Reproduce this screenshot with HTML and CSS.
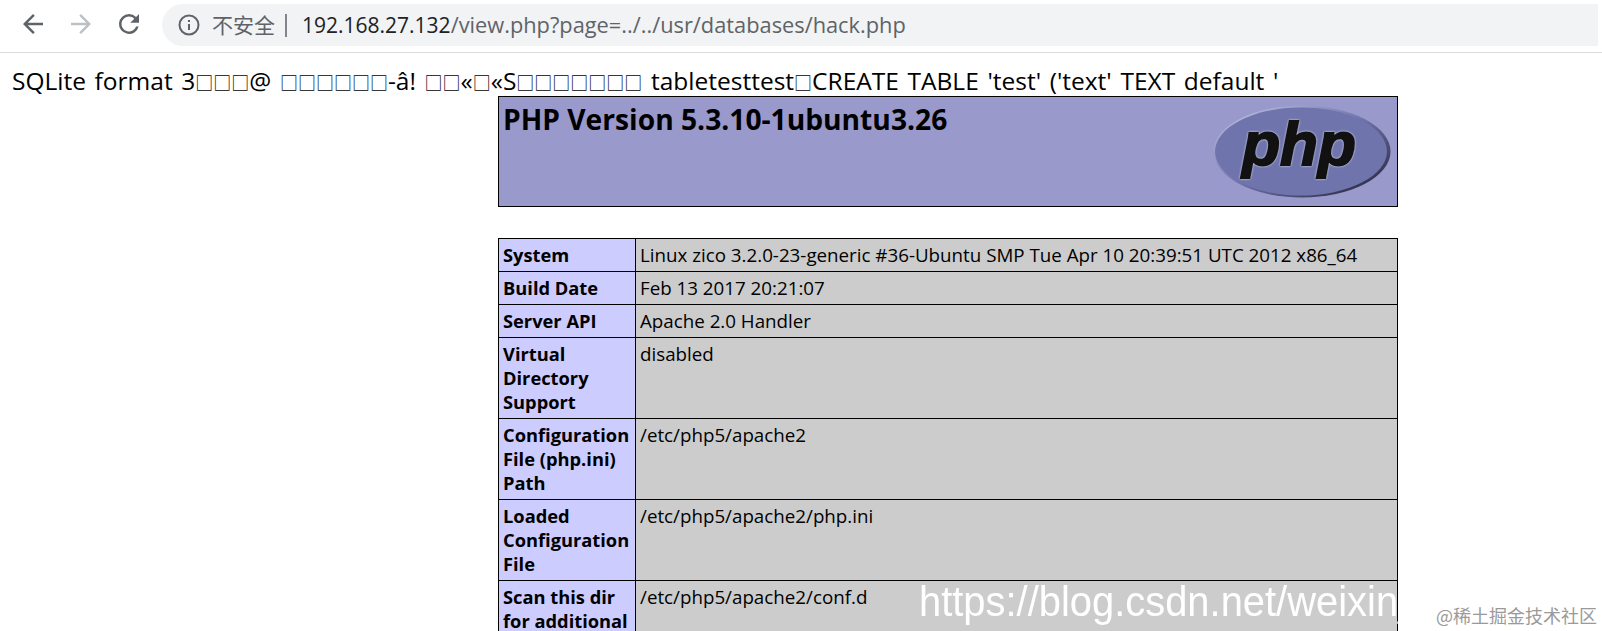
FILE: index.html
```html
<!DOCTYPE html>
<html lang="en">
<head>
<meta charset="utf-8">
<title>hack.php</title>
<link rel="stylesheet" href="styles.css">
</head>
<body>
<header class="toolbar">
  <svg class="nav" width="30" height="30" viewBox="0 0 24 24"><path d="M20 11H7.8l5.6-5.6L12 4l-8 8 8 8 1.4-1.4L7.8 13H20z" fill="#5f6368"/></svg>
  <svg class="nav" width="30" height="30" viewBox="0 0 24 24"><path d="M4 11h12.2l-5.6-5.6L12 4l8 8-8 8-1.4-1.4 5.6-5.6H4z" fill="#bdc1c6"/></svg>
  <svg class="nav" width="30" height="30" viewBox="0 0 24 24"><path d="M17.65 6.35A7.96 7.96 0 0 0 12 4a8 8 0 1 0 7.73 10h-2.08A6 6 0 1 1 12 6c1.66 0 3.14.69 4.22 1.78L13 11h7V4z" fill="#5f6368"/></svg>
  <div class="omnibox">
    <svg class="info" width="24" height="24" viewBox="0 0 24 24"><circle cx="12" cy="12" r="9.5" fill="none" stroke="#5f6368" stroke-width="2"/><path d="M11 11h2v6h-2zM11 7h2v2h-2z" fill="#5f6368"/></svg>
    <span class="insecure">不安全</span>
    <span class="sep"></span>
    <span class="url"><span class="host">192.168.27.132</span>/view.php?page=../../usr/databases/hack.php</span>
  </div>
</header>
<main class="page">
  <p class="dump">SQLite format 3<span class="tofu">□□□</span>@ <span class="tofu">□□□□□□</span>-â! <span class="tofu">□□</span>«<span class="tofu">□</span>«S<span class="tofu">□□□□□□□</span> tabletesttest<span class="tofu">□</span>CREATE TABLE 'test' ('text' TEXT default '</p>
  <div class="phpinfo">
    <div class="banner">
      <h1>PHP Version 5.3.10-1ubuntu3.26</h1>
      <svg class="logo" width="178" height="93" viewBox="0 0 178 93">
        <defs>
          <linearGradient id="rim" x1="0" y1="0" x2="1" y2="1">
            <stop offset="0" stop-color="#c8cbe4"/>
            <stop offset=".45" stop-color="#777bb4"/>
            <stop offset="1" stop-color="#1c1c30"/>
          </linearGradient>
        </defs>
        <ellipse cx="89" cy="46.5" rx="88.5" ry="46" fill="url(#rim)"/>
        <ellipse cx="88" cy="46.5" rx="86" ry="44" fill="#6f74ad"/>
        <text x="86" y="60" class="logo-text">php</text>
      </svg>
    </div>
    <table class="info-table">
      <tr><th>System</th><td>Linux zico 3.2.0-23-generic #36-Ubuntu SMP Tue Apr 10 20:39:51 UTC 2012 x86_64</td></tr>
      <tr><th>Build Date</th><td>Feb 13 2017 20:21:07</td></tr>
      <tr><th>Server API</th><td>Apache 2.0 Handler</td></tr>
      <tr><th>Virtual Directory Support</th><td>disabled</td></tr>
      <tr><th>Configuration File (php.ini) Path</th><td>/etc/php5/apache2</td></tr>
      <tr><th>Loaded Configuration File</th><td>/etc/php5/apache2/php.ini</td></tr>
      <tr><th>Scan this dir for additional .ini files</th><td>/etc/php5/apache2/conf.d</td></tr>
    </table>
  </div>
</main>
<div class="mark-csdn">https://blog.csdn.net/weixin_</div>
<div class="mark-juejin">@稀土掘金技术社区</div>
</body>
</html>
```
FILE: styles.css
```css
html, body {
  margin: 0;
  height: 631px;
  overflow: hidden;
  background: #fff;
}
body {
  position: relative;
  color: #000;
  font-family: "Noto Sans", "Noto Sans CJK SC", sans-serif;
}
.toolbar {
  display: flex;
  align-items: center;
  height: 52px;
  padding: 0 0 0 18px;
  border-bottom: 1px solid #dadce0;
  box-sizing: content-box;
}
.nav { margin: 0 18px 4px 0; flex: none; }
.omnibox {
  flex: 1;
  display: flex;
  align-items: center;
  height: 42px;
  margin: 0 4px 2px 0;
  padding-left: 15px;
  background: #f1f3f4;
  border-radius: 21px 0 0 21px;
}
.info { flex: none; margin-right: 11px; }
.insecure {
  margin-bottom: 2px;
  font: 21px/1 "Noto Sans CJK SC", sans-serif;
  color: #5f6368;
}
.sep {
  width: 2px;
  height: 23px;
  margin: 0 15px 0 10px;
  background: #80868b;
}
.url {
  font: 21.8px/1 "Open Sans", sans-serif;
  color: #5f6368;
  white-space: nowrap;
}
.host { color: #202124; font-size: 21px; }
.page { padding: 0 0 0 12px; }
.dump {
  margin: 0;
  height: 43px;
  padding-top: 13px;
  box-sizing: border-box;
  font: 24.5px/30px "Open Sans", sans-serif;
  word-spacing: 2.3px;
  white-space: nowrap;
}
.tofu {
  font: 18px/1 "Noto Sans CJK SC", sans-serif;
}
.phpinfo {
  width: 900px;
  margin-left: 486px;
  font-size: 18px;
  font-family: "Open Sans", sans-serif;
}
.banner {
  display: flex;
  justify-content: space-between;
  align-items: flex-start;
  box-sizing: border-box;
  height: 111px;
  padding: 4px 6px 0 4px;
  border: 1px solid #000;
  background: #9999cc;
}
.banner h1 {
  margin: 0;
  font-size: 28.2px;
  line-height: 36px;
  font-weight: 700;
}
.logo { margin-top: 4px; }
.logo-text {
  font: italic 700 62px "Liberation Sans", sans-serif;
  text-anchor: middle;
  fill: #111;
  stroke: #111;
  stroke-width: 2px;
  filter: drop-shadow(0 0 1px #e4e4f0);
}
.info-table {
  width: 900px;
  margin-top: 31px;
  border-collapse: collapse;
  table-layout: fixed;
  font-size: 18.75px;
  line-height: 24px;
}
.info-table th, .info-table td {
  padding: 4px 4px;
  border: 1px solid #000;
  text-align: left;
  vertical-align: top;
}
.info-table th {
  width: 128px;
  background: #ccccff;
  font-size: 18.3px;
  font-weight: 700;
}
.info-table td { background: #cccccc; }
.mark-csdn {
  position: absolute;
  left: 919px;
  top: 574px;
  color: #fff;
  font: 42px/56px "Liberation Sans", sans-serif;
  white-space: nowrap;
  transform: scaleX(.95);
  transform-origin: left center;
}
.mark-juejin {
  position: absolute;
  left: 1436px;
  top: 603px;
  color: #9a9a9a;
  font: 18px/24px "Noto Sans CJK SC", sans-serif;
  white-space: nowrap;
}
```
